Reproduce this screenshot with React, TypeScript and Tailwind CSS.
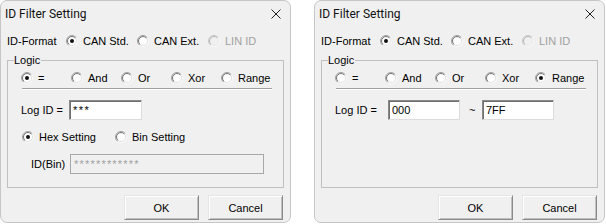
import React from "react";

const BODY = "font-['Liberation_Sans',Arial,sans-serif] text-[11px] leading-[16px] text-black";

function Radio({ checked = false, disabled = false }: { checked?: boolean; disabled?: boolean }) {
  const outer = disabled ? "rgo-d" : "rgo";
  const inner = disabled ? "rgi-d" : "rgi";
  return (
    <svg width="12" height="12" viewBox="0 0 12 12" className="shrink-0">
      <defs>
        <linearGradient id="rgo" x1="0" y1="0" x2="1" y2="1">
          <stop offset="0" stopColor="#9a9a9a" />
          <stop offset="0.5" stopColor="#a8a8a8" />
          <stop offset="0.56" stopColor="#f4f4f4" />
          <stop offset="1" stopColor="#ffffff" />
        </linearGradient>
        <linearGradient id="rgi" x1="0" y1="0" x2="1" y2="1">
          <stop offset="0" stopColor="#6a6a6a" />
          <stop offset="0.5" stopColor="#7a7a7a" />
          <stop offset="0.56" stopColor="#dedede" />
          <stop offset="1" stopColor="#e6e6e6" />
        </linearGradient>
        <linearGradient id="rgo-d" x1="0" y1="0" x2="1" y2="1">
          <stop offset="0" stopColor="#c4c4c4" />
          <stop offset="0.5" stopColor="#cccccc" />
          <stop offset="0.56" stopColor="#f6f6f6" />
          <stop offset="1" stopColor="#ffffff" />
        </linearGradient>
        <linearGradient id="rgi-d" x1="0" y1="0" x2="1" y2="1">
          <stop offset="0" stopColor="#b0b0b0" />
          <stop offset="0.5" stopColor="#bababa" />
          <stop offset="0.56" stopColor="#e6e6e6" />
          <stop offset="1" stopColor="#ececec" />
        </linearGradient>
      </defs>
      <circle cx="6" cy="6" r="5.5" fill="none" stroke={`url(#${outer})`} />
      <circle cx="6" cy="6" r="4.5" fill={disabled ? "#f0f0f0" : "#ffffff"} stroke={`url(#${inner})`} />
      {checked && <circle cx="6" cy="6" r="2" fill="#111111" />}
    </svg>
  );
}

function Option({
  label,
  checked,
  disabled,
  className = "",
}: {
  label: string;
  checked?: boolean;
  disabled?: boolean;
  className?: string;
}) {
  return (
    <div className={`flex shrink-0 items-center gap-[5px] ${className}`}>
      <Radio checked={checked} disabled={disabled} />
      <span className={disabled ? "text-[#a0a0a0]" : ""}>{label}</span>
    </div>
  );
}

function Field({ value, className = "", disabled = false }: { value: string; className?: string; disabled?: boolean }) {
  return (
    <div
      className={`flex h-[20px] shrink-0 items-center border pl-[3px] ${
        disabled
          ? "border-[#a8a8a8] bg-[#f0f0f0] text-[#a0a0a0]"
          : "border-t-[#8a8a8a] border-l-[#8a8a8a] border-r-[#dcdcdc] border-b-[#dcdcdc] bg-white shadow-[inset_1px_1px_0_#6e6e6e]"
      } ${className}`}
    >
      {value}
    </div>
  );
}

function Button({ label }: { label: string }) {
  return (
    <div className="flex h-[25px] w-[75px] items-center justify-center border border-t-[#e6e6e6] border-l-[#e6e6e6] border-r-[#8a8a8a] border-b-[#8a8a8a] bg-[#f0f0f0] shadow-[inset_1px_1px_0_#ffffff,inset_-1px_-1px_0_#c0c0c0]">
      {label}
    </div>
  );
}

function Dialog({ range }: { range: boolean }) {
  const logic = ["=", "And", "Or", "Xor", "Range"];
  const selected = range ? "Range" : "=";
  return (
    <div className={`relative h-[223px] w-[291px] shrink-0 overflow-hidden rounded-[7px] border border-[#c6c6c6] bg-[#f0f0f0] ${BODY}`}>
      {/* title bar */}
      <div className="flex h-[26px] items-center justify-between pl-[4px] pr-[9px]">
        <span className="font-['Roboto',Arial,sans-serif] text-[12px] leading-[16px] text-[#111]">ID Filter Setting</span>
        <svg width="10" height="10" viewBox="0 0 10 10">
          <path d="M0.5 0.5 L9.5 9.5 M9.5 0.5 L0.5 9.5" stroke="#222" strokeWidth="1" />
        </svg>
      </div>

      {/* ID format */}
      <div className="mt-[6px] flex h-[16px] items-center pl-[6px]">
        <span className="w-[59px] shrink-0">ID-Format</span>
        <Option label="CAN Std." checked className="w-[71px]" />
        <Option label="CAN Ext." className="w-[71px]" />
        <Option label="LIN ID" disabled />
      </div>

      {/* logic group */}
      <div className="relative ml-[6px] mt-[11px] h-[128px] w-[277px] border border-[#c0c0c0]">
        <span className="absolute -top-[9px] left-[6px] bg-[#f0f0f0] pr-[1px]">Logic</span>
        <div className="mt-[9px] flex h-[16px] items-center pl-[13px]">
          {logic.map((l) => (
            <Option key={l} label={l} checked={l === selected} className="w-[50px]" />
          ))}
        </div>
        <div className="ml-[14px] mt-[2px] h-[2px] w-[250px] border-t border-t-[#a0a0a0] border-b border-b-white" />

        {range ? (
          <div className="mt-[10px] flex h-[20px] items-center pl-[13px]">
            <span className="w-[53px] shrink-0">Log ID =</span>
            <Field value="000" className="w-[72px]" />
            <span className="w-[22px] shrink-0 pl-[9px]">~</span>
            <Field value="7FF" className="w-[72px]" />
          </div>
        ) : (
          <>
            <div className="mt-[10px] flex h-[20px] items-center pl-[13px]">
              <span className="w-[48px] shrink-0">Log ID =</span>
              <Field value="***" className="w-[73px] tracking-[1.5px]" />
            </div>
            <div className="mt-[9px] flex h-[16px] items-center pl-[14px]">
              <Option label="Hex Setting" checked className="w-[93px]" />
              <Option label="Bin Setting" />
            </div>
            <div className="mt-[9px] flex h-[20px] items-center pl-[23px]">
              <span className="w-[39px] shrink-0">ID(Bin)</span>
              <Field value="************" disabled className="w-[194px] tracking-[1.2px]" />
            </div>
          </>
        )}
      </div>

      {/* buttons */}
      <div className="ml-[123px] mt-[7px] flex gap-[9px]">
        <Button label="OK" />
        <Button label="Cancel" />
      </div>
    </div>
  );
}

export default function App() {
  return (
    <div className="flex h-[224px] w-[606px] gap-[23px] bg-white">
      <Dialog range={false} />
      <Dialog range />
    </div>
  );
}
